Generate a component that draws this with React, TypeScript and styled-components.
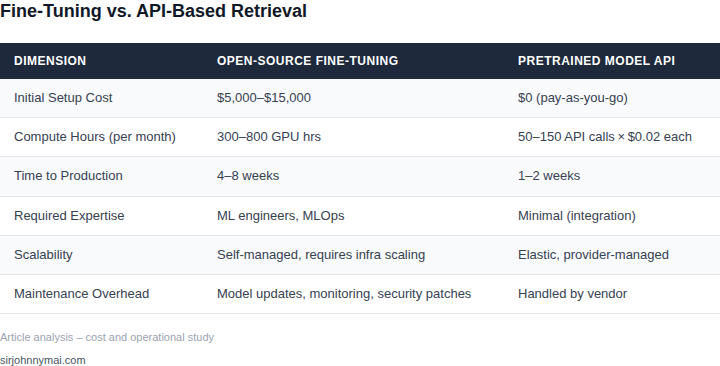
import React from 'react';
import styled, { createGlobalStyle } from 'styled-components';

// -------------------------
// Data
// -------------------------

const columns = ['Dimension', 'Open-Source Fine-Tuning', 'Pretrained Model API'];
const widths = [203, 301, 216];

const rows: string[][] = [
	['Initial Setup Cost', '$5,000–$15,000', '$0 (pay-as-you-go)'],
	['Compute Hours (per month)', '300–800 GPU hrs', '50–150 API calls\u2009×\u2009$0.02 each'],
	['Time to Production', '4–8 weeks', '1–2 weeks'],
	['Required Expertise', 'ML engineers, MLOps', 'Minimal (integration)'],
	['Scalability', 'Self-managed, requires infra scaling', 'Elastic, provider-managed'],
	['Maintenance Overhead', 'Model updates, monitoring, security patches', 'Handled by vendor'],
];

// -------------------------
// Styled Components
// -------------------------

const Global = createGlobalStyle`
	body {
		margin: 0;
		background: #ffffff;
		font-family: "Liberation Sans", Arial, sans-serif;
	}
`;

const Wrap = styled.div`
	display: flex;
	flex-direction: column;
	width: 720px;
`;

const Title = styled.h2`
	margin: 0 0 21px;
	font-size: 18px;
	line-height: 22px;
	font-weight: 700;
	color: #111827;
`;

const Table = styled.table`
	width: 100%;
	border-collapse: collapse;
	table-layout: fixed;
`;

const Th = styled.th`
	background: #1e293b;
	color: #ffffff;
	text-align: left;
	padding: 10px 14px;
	font-size: 12px;
	line-height: 16px;
	font-weight: 700;
	letter-spacing: 0.5px;
	text-transform: uppercase;
`;

const Tr = styled.tr<{ $striped: boolean }>`
	background: ${p => (p.$striped ? '#f8fafc' : '#ffffff')};
	border-bottom: 1px solid #e5e7eb;
`;

const Td = styled.td`
	padding: 10px 14px;
	font-size: 13px;
	line-height: 1.4;
	color: #374151;
	white-space: nowrap;
`;

const Footer = styled.div`
	display: flex;
	flex-direction: column;
	gap: 9px;
	margin-top: 16px;
	font-size: 11px;
	line-height: 14px;
`;

const Note = styled.div`
	color: #9ca3af;
`;

const Source = styled.div`
	color: #4b5563;
`;

// -------------------------
// Page
// -------------------------

export default function App() {
	return (
		<Wrap>
			<Global />
			<Title>Fine-Tuning vs. API-Based Retrieval</Title>
			<Table>
				<colgroup>
					{widths.map((w, i) => (
						<col key={i} style={{ width: w }} />
					))}
				</colgroup>
				<thead>
					<tr>
						{columns.map(c => (
							<Th key={c}>{c}</Th>
						))}
					</tr>
				</thead>
				<tbody>
					{rows.map((r, i) => (
						<Tr key={r[0]} $striped={i % 2 === 0}>
							{r.map((cell, j) => (
								<Td key={j}>{cell}</Td>
							))}
						</Tr>
					))}
				</tbody>
			</Table>
			<Footer>
				<Note>Article analysis – cost and operational study</Note>
				<Source>sirjohnnymai.com</Source>
			</Footer>
		</Wrap>
	);
}
